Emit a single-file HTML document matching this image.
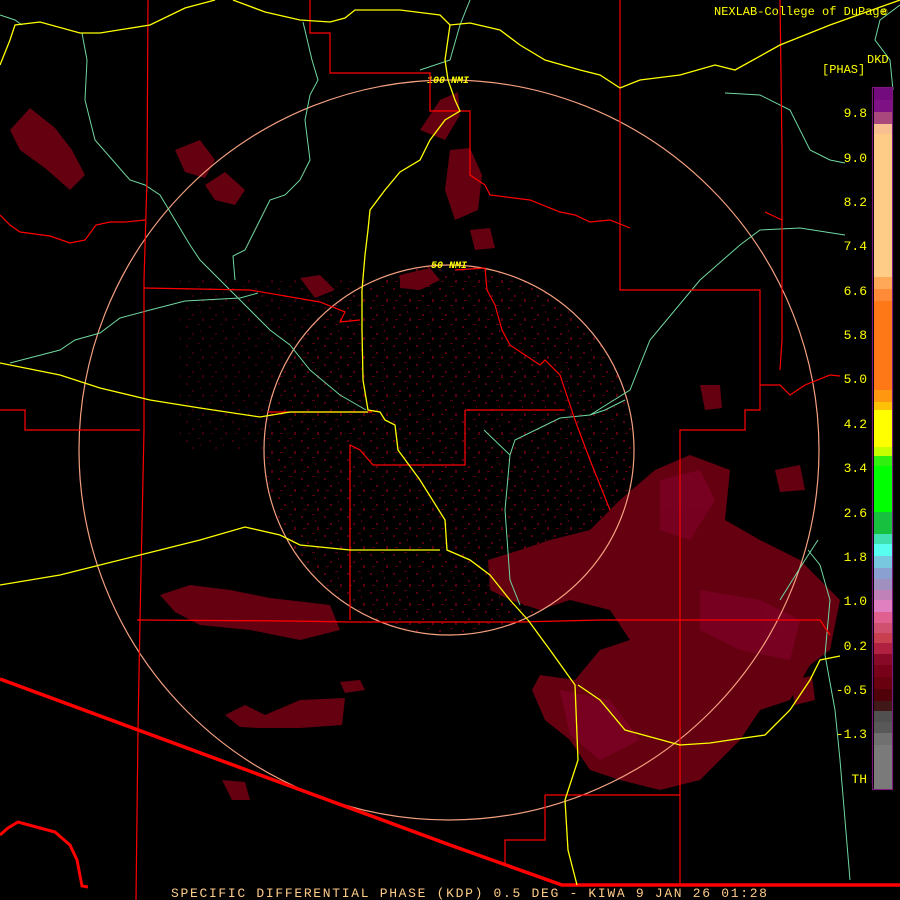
<!DOCTYPE html>
<html><head><meta charset="utf-8"><style>
html,body{margin:0;padding:0;background:#000;width:900px;height:900px;overflow:hidden}
svg{display:block}
text{font-family:"Liberation Mono","DejaVu Sans Mono",monospace}
</style></head><body>
<svg width="900" height="900" viewBox="0 0 900 900" xmlns="http://www.w3.org/2000/svg">
<defs>
<pattern id="sp" width="23" height="19" patternUnits="userSpaceOnUse">
<rect x="2" y="3" width="2" height="2" fill="#580010"/><rect x="13" y="1" width="3" height="1" fill="#580010"/>
<rect x="8" y="10" width="2" height="2" fill="#580010"/><rect x="18" y="14" width="2" height="3" fill="#580010"/>
<rect x="4" y="15" width="3" height="1" fill="#580010"/><rect x="16" y="7" width="1" height="2" fill="#580010"/>
</pattern>
<clipPath id="c50"><circle cx="449" cy="450" r="185"/></clipPath>
</defs>
<rect width="900" height="900" fill="#000"/>
<rect x="180" y="250" width="460" height="390" fill="url(#sp)" clip-path="url(#c50)"/>
<rect x="180" y="280" width="250" height="170" fill="url(#sp)" opacity="0.6"/>
<g fill="#650010">
<polygon points="10,130 30,108 55,128 72,150 85,175 70,190 45,168 20,150"/>
<polygon points="175,150 200,140 215,160 205,178 185,172"/>
<polygon points="205,185 225,172 245,190 235,205 215,200"/>
<polygon points="420,130 440,100 458,92 460,115 445,140"/>
<polygon points="450,150 470,148 482,175 478,210 455,220 445,190"/>
<polygon points="400,275 430,268 440,280 420,290 400,288"/>
<polygon points="470,230 490,228 495,248 475,250"/>
<polygon points="300,278 320,275 335,290 315,298"/>
<polygon points="160,595 190,585 230,590 270,598 330,605 340,630 300,640 250,630 200,625 175,612"/>
<polygon points="225,715 245,705 265,715 300,700 345,698 342,725 300,728 260,728 240,727"/>
<polygon points="340,682 360,680 365,690 345,693"/>
<polygon points="222,780 245,782 250,800 232,800"/>
<polygon points="700,385 720,385 722,408 705,410"/>
<polygon points="488,560 520,550 550,540 590,530 620,500 655,470 690,455 730,470 725,520 760,540 800,560 820,580 840,600 830,650 810,665 790,700 760,710 740,740 720,760 700,780 660,790 620,780 590,770 570,740 545,720 532,690 540,675 575,680 600,650 630,640 610,610 570,600 540,610 510,600 490,590"/>
<polygon points="775,470 800,465 805,490 780,492"/>
<polygon points="790,680 812,676 815,700 795,705"/>
</g>
<g fill="#7a0022" opacity="0.9">
<polygon points="660,480 700,470 715,500 690,540 660,530"/>
<polygon points="700,590 760,600 800,620 790,660 740,650 700,630"/>
<polygon points="560,690 610,700 640,740 600,760 570,735"/>
</g>
<g fill="none" stroke="#f4a080" stroke-width="1.2">
<circle cx="449" cy="450" r="185"/>
<circle cx="449" cy="450" r="370"/>
</g>
<text x="448" y="83" font-size="10" font-weight="bold" font-style="italic" fill="#ffff00" text-anchor="middle" font-family="Liberation Sans,sans-serif">100 NMI</text>
<text x="449" y="268" font-size="10" font-weight="bold" font-style="italic" fill="#ffff00" text-anchor="middle" font-family="Liberation Sans,sans-serif">50 NMI</text>
<g fill="none" stroke="#70d8a0" stroke-width="1">
<polyline points="0,15 15,20 22,25"/>
<polyline points="82,33 87,60 85,100 95,140 130,180 145,185 160,195 190,245 200,260 240,300 270,330 290,345 310,370 340,395 366,410"/>
<polyline points="303,22 312,60 318,80 310,95 305,120 310,160 300,180 285,195 270,200 255,230 245,250 233,256 235,280"/>
<polyline points="10,363 60,350 75,340 100,333 120,318 150,310 185,301 240,298 258,293"/>
<polyline points="420,70 450,60 460,25 470,0"/>
<polyline points="725,93 760,95 790,110 810,150 830,160 845,163"/>
<polyline points="900,5 880,20 875,40 890,60 893,90"/>
<polyline points="520,605 510,580 505,510 510,455 515,440 560,418 590,415 605,410 625,400"/>
<polyline points="484,430 510,455"/>
<polyline points="590,415 630,390 650,340 700,280 740,245 760,230 800,228 845,235"/>
<polyline points="808,550 820,565 830,600 825,655 835,710 840,760 850,880"/>
<polyline points="780,600 805,560 818,540"/>
</g>
<g fill="none" stroke="#ff0000" stroke-width="1.2">
<polyline points="148,0 147,180 144,280 144,430 140,620 138,730 136,900"/>
<polyline points="0,215 10,225 20,232 50,236 70,243 85,240 96,225 110,222 125,222 145,220"/>
<polyline points="0,410 25,410 25,430 140,430"/>
<polyline points="144,288 250,290 320,302 345,312 340,322 360,320"/>
<polyline points="310,0 310,33 330,33 330,73 430,73 430,111 460,111"/>
<polyline points="460,111 470,111 470,175 485,185 490,195 530,200 560,212 575,215 590,222 610,220 630,228"/>
<polyline points="620,0 620,290 760,290 760,385 780,385 790,395 805,385 830,375 840,376"/>
<polyline points="760,385 760,410 745,410 745,430 680,430 680,885"/>
<polyline points="680,620 820,620 830,635"/>
<polyline points="455,270 485,268 487,290 495,305 502,330 510,345 540,365 545,360 560,375 575,420 590,460 610,510"/>
<polyline points="268,412 320,412 372,412"/>
<polyline points="465,410 465,465 373,465 360,450 350,445 350,620"/>
<polyline points="465,410 565,410"/>
<polyline points="137,620 290,621 350,622 520,622 600,620 680,620"/>
<polyline points="545,795 600,795 680,795"/>
<polyline points="545,795 545,840 505,840 505,865 560,885"/>
<polyline points="780,0 782,150 782,340 780,370"/>
<polyline points="765,212 782,220"/>
</g>
<polyline points="0,679 450,845 562,885 900,885" fill="none" stroke="#ff0000" stroke-width="3.5"/>
<polyline points="0,835 8,828 18,822 40,828 55,832 70,845 77,860 82,886 88,887" fill="none" stroke="#ff0000" stroke-width="3"/>
<g fill="none" stroke="#ffff00" stroke-width="1.3">
<polyline points="0,65 10,40 15,25 40,22 80,33 100,33 150,25 185,8 215,0"/>
<polyline points="233,0 265,12 300,20 330,22 345,18 355,10 400,10 440,15 450,25 470,23 500,30 520,45 545,60 580,70 600,75 620,88"/>
<polyline points="450,25 445,60 448,80 455,100 460,111 445,120 430,140 420,160 400,172 385,190 370,210 368,230 365,255 362,290 362,330 363,380 368,410 380,412 385,420 395,425 398,450 420,480 445,520 447,550 470,560 490,575 510,600 528,620"/>
<polyline points="528,620 550,650 575,685 578,760 565,800 568,850 577,885"/>
<polyline points="578,685 600,700 625,730 680,745 710,743 730,740 765,735 790,710 810,680 820,660 840,656"/>
<polyline points="620,88 640,80 680,75 715,65 735,70 780,45 805,35 830,25 900,0"/>
<polyline points="0,363 60,375 100,388 150,400 200,408 260,417 290,412 368,412"/>
<polyline points="0,585 60,575 100,565 140,555 200,540 245,527 280,535 300,545 350,550 440,550"/>
</g>
<text x="714" y="15" font-size="12" fill="#ffff00">NEXLAB-College of DuPage</text>
<text x="882" y="15" font-size="9" fill="#ffff00">©</text>
<text x="822" y="73" font-size="12" fill="#ffff00">[PHAS]</text>
<text x="867" y="63" font-size="12" fill="#ffff00">DKD</text>
<rect x="872.5" y="87.5" width="20" height="702" fill="#000" stroke="#7a1a7a" stroke-width="1.2"/>
<g>
<rect x="874" y="88" width="18" height="12" fill="#730b7e"/>
<rect x="874" y="100" width="18" height="12" fill="#7e1284"/>
<rect x="874" y="112" width="18" height="12" fill="#a8487c"/>
<rect x="874" y="124" width="18" height="10" fill="#f8c090"/>
<rect x="874" y="134" width="18" height="143" fill="#ffcc88"/>
<rect x="874" y="277" width="18" height="12" fill="#ffa858"/>
<rect x="874" y="289" width="18" height="12" fill="#ff8a38"/>
<rect x="874" y="301" width="18" height="89" fill="#ff7818"/>
<rect x="874" y="390" width="18" height="12" fill="#ff9810"/>
<rect x="874" y="402" width="18" height="8" fill="#ffc008"/>
<rect x="874" y="410" width="18" height="37" fill="#ffff00"/>
<rect x="874" y="447" width="18" height="9" fill="#c8ff00"/>
<rect x="874" y="456" width="18" height="10" fill="#30f010"/>
<rect x="874" y="466" width="18" height="46" fill="#00ff00"/>
<rect x="874" y="512" width="18" height="22" fill="#18c040"/>
<rect x="874" y="534" width="18" height="10" fill="#40e0b0"/>
<rect x="874" y="544" width="18" height="12" fill="#58fff0"/>
<rect x="874" y="556" width="18" height="12" fill="#78c8e0"/>
<rect x="874" y="568" width="18" height="11" fill="#8aa0d0"/>
<rect x="874" y="579" width="18" height="11" fill="#a090c0"/>
<rect x="874" y="590" width="18" height="10" fill="#c080b8"/>
<rect x="874" y="600" width="18" height="12" fill="#e080c0"/>
<rect x="874" y="612" width="18" height="11" fill="#e06090"/>
<rect x="874" y="623" width="18" height="10" fill="#d05070"/>
<rect x="874" y="633" width="18" height="10" fill="#c84050"/>
<rect x="874" y="643" width="18" height="11" fill="#b02040"/>
<rect x="874" y="654" width="18" height="11" fill="#880828"/>
<rect x="874" y="665" width="18" height="12" fill="#780018"/>
<rect x="874" y="677" width="18" height="12" fill="#680010"/>
<rect x="874" y="689" width="18" height="12" fill="#500008"/>
<rect x="874" y="701" width="18" height="10" fill="#401818"/>
<rect x="874" y="711" width="18" height="11" fill="#505050"/>
<rect x="874" y="722" width="18" height="11" fill="#585858"/>
<rect x="874" y="733" width="18" height="12" fill="#707070"/>
<rect x="874" y="745" width="18" height="44" fill="#7a7a7a"/>
</g>
<g font-size="13" fill="#ffff00" text-anchor="end">
<text x="867" y="117">9.8</text>
<text x="867" y="162">9.0</text>
<text x="867" y="206">8.2</text>
<text x="867" y="250">7.4</text>
<text x="867" y="295">6.6</text>
<text x="867" y="339">5.8</text>
<text x="867" y="383">5.0</text>
<text x="867" y="428">4.2</text>
<text x="867" y="472">3.4</text>
<text x="867" y="517">2.6</text>
<text x="867" y="561">1.8</text>
<text x="867" y="605">1.0</text>
<text x="867" y="650">0.2</text>
<text x="867" y="694">-0.5</text>
<text x="867" y="738">-1.3</text>
<text x="867" y="783">TH</text>
</g>
<text x="171" y="897" font-size="13" fill="#ffcc88" textLength="596" lengthAdjust="spacing">SPECIFIC DIFFERENTIAL PHASE (KDP) 0.5 DEG - KIWA 9 JAN 26 01:28</text>
</svg>
</body></html>
